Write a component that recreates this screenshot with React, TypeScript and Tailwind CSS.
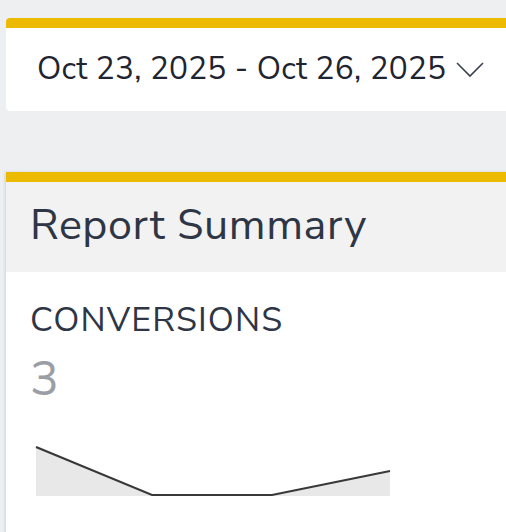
import React from 'react';

const font = { fontFamily: '"Nunito Sans", Lato, "Open Sans", sans-serif' };

const Sparkline: React.FC = () => {
  const pts = '1,1 117,49 237,49 355,25';
  return (
    <svg width="358" height="51" viewBox="0 0 358 51" className="block">
      <polygon points="1,1 117,49 237,49 355,25 355,50 1,50" fill="#e8e8e8" />
      <polyline points={pts} fill="none" stroke="#383838" strokeWidth="2.2" />
    </svg>
  );
};

export default function App() {
  return (
    <div className="w-[506px] h-[532px] overflow-hidden bg-[#eeeff1] pl-[6px] pt-[18px]" style={font}>
      {/* Date range picker */}
      <div className="w-[520px] h-[93px] bg-white border-t-[10px] border-[#ecba00] rounded-[4px] flex items-center pl-[31px] pb-[2px]">
        <span className="text-[31.6px] leading-none text-[#1f2530] tracking-[0.2px]">Oct 23, 2025 - Oct 26, 2025</span>
        <svg width="28" height="16" viewBox="0 0 28 16" className="ml-[10px] mt-[2px]">
          <polyline points="1,1 14,14 27,1" fill="none" stroke="#3a4150" strokeWidth="1.6" />
        </svg>
      </div>

      {/* Report summary card */}
      <div className="mt-[61px] w-[520px] h-[400px] bg-white border-t-[10px] border-[#ecba00] shadow-[-1px_0_3px_rgba(0,0,0,0.12)]">
        <div className="h-[90px] bg-[#f2f2f2] flex items-center pl-[24px]">
          <h2 className="text-[43px] leading-none text-[#2e3646] tracking-[0.6px] -mt-[3px]">Report Summary</h2>
        </div>
        <div className="pl-[24px] pt-[31px]">
          <div className="text-[34px] leading-none text-[#2e3646] tracking-[1.1px]">CONVERSIONS</div>
          <div className="text-[48px] leading-none text-[#9a9ea6] mt-[18px]">3</div>
          <div className="mt-[43px] ml-[5px]">
            <Sparkline />
          </div>
        </div>
      </div>
    </div>
  );
}
